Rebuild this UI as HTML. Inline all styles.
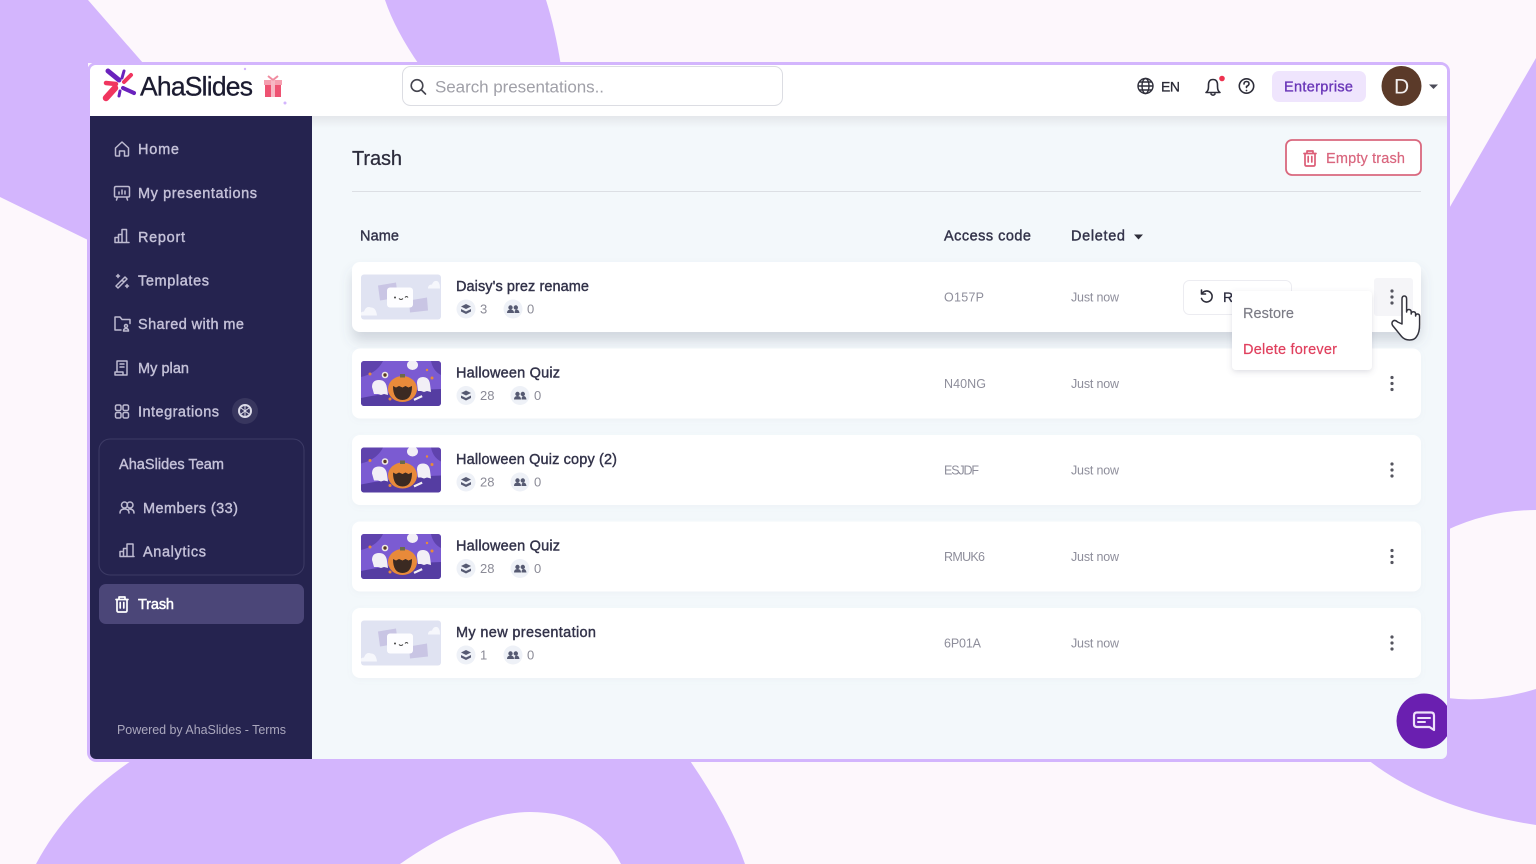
<!DOCTYPE html>
<html lang="en"><head><meta charset="utf-8"><title>AhaSlides - Trash</title>
<style>
html,body{margin:0;padding:0;width:1536px;height:864px;overflow:hidden;background:#fdf7fc}
svg{display:block}
text{font-family:"Liberation Sans",sans-serif}
.n{font-size:14.500px;fill:#c4c1d8;stroke:#c4c1d8;stroke-width:.4}
.t{font-size:14.500px;fill:#33334a;stroke:#33334a;stroke-width:.4}
.s{font-size:13px;fill:#8b8b97}
.ic{fill:none;stroke:#bdbad0;stroke-width:1.500;stroke-linecap:round;stroke-linejoin:round}
.dk{fill:none;stroke:#2e2e3a;stroke-width:1.600;stroke-linecap:round;stroke-linejoin:round}
</style></head><body>
<svg width="1536" height="864" viewBox="0 0 1536 864" xmlns="http://www.w3.org/2000/svg">
<defs>
<linearGradient id="fade" x1="0" y1="0" x2="0" y2="1"><stop offset="0" stop-color="#e4e7eb"/><stop offset="1" stop-color="#f3f8fb"/></linearGradient>
<filter id="sh" x="-5%" y="-30%" width="110%" height="170%"><feDropShadow dx="0" dy="2" stdDeviation="3" flood-color="#8a93a8" flood-opacity=".06"/></filter>
<filter id="sh2" x="-5%" y="-30%" width="110%" height="180%"><feDropShadow dx="0" dy="9" stdDeviation="6" flood-color="#5d6478" flood-opacity=".22"/></filter>
<filter id="sh3" x="-15%" y="-15%" width="130%" height="130%"><feDropShadow dx="0" dy="2" stdDeviation="3" flood-color="#5d6478" flood-opacity=".2"/></filter>
<clipPath id="win"><rect x="90" y="65" width="1357" height="694" rx="6"/></clipPath>
<clipPath id="th"><rect width="80" height="45" rx="3"/></clipPath>
<g id="blank" clip-path="url(#th)">
<rect width="80" height="45" fill="#e0e3f2"/>
<path d="M17 11l18-3 2 15-18 3z" fill="#c9c5e4"/><path d="M48 26l18-3 1 13-18 2z" fill="#c9c5e4"/>
<rect x="26" y="13" width="26" height="20" rx="3" fill="#fdfdff"/>
<circle cx="34" cy="23" r="1" fill="#444"/><path d="M38 24q2 2 4 0" stroke="#444" fill="none"/><path d="M44 23q1.500-2 3 0" stroke="#444" fill="none"/>
<path d="M-1 41q0-4 4-4 2-6 7-4 5 0 6 8z" fill="#f6f7fc"/><path d="M67 14q0-4 4-4 2-5 6-3 2 2 2 7z" fill="#f6f7fc"/>
</g>
<g id="hw" clip-path="url(#th)">
<rect width="80" height="45" fill="#7b5bd2"/>
<path d="M0 0h22q-6 12-22 16z" fill="#5f43ad"/><path d="M0 37q40-8 80-9v17H0z" fill="#553da2"/><path d="M70 0h10v14q-8-4-10-14z" fill="#5f43ad"/>
<path d="M11 26q0-7 7-7t8 8l1 7-4-1-3 1-3-1-4 0z" fill="#f2eff6"/>
<path d="M56 22q0-6 6-6t7 7l1 8-4-1-3 1-3-1-3 0z" fill="#f2eff6"/>
<ellipse cx="51.500" cy="4" rx="5.500" ry="5" fill="#f2eff6"/>
<circle cx="24" cy="14" r="3.300" fill="#f0ebe4"/><circle cx="24" cy="14" r="1.700" fill="#5a3a22"/>
<ellipse cx="41.500" cy="28" rx="14.500" ry="13" fill="#e88a3a"/>
<path d="M32 25l3 1.500 3-1.500 3.500 1.500 3-1.500 3 1.500 3.500-1.500q0 14-9.500 14T32 25z" fill="#3b2a22"/>
<rect x="39" y="13" width="5" height="3.500" fill="#6b6a4a"/>
<circle cx="9" cy="13" r="1.500" fill="#e88a3a"/><circle cx="71" cy="17" r="1.500" fill="#e88a3a"/><circle cx="29" cy="38" r="1.500" fill="#e88a3a"/><circle cx="66" cy="9" r="1.200" fill="#e88a3a"/>
<rect x="53" y="36" width="9" height="2.200" fill="#f2eff6" transform="rotate(-25 57 38)"/>
</g>
<g id="st">
<circle cx="0" cy="0" r="9.500" fill="#eef1f7"/><path d="M0-5l5 2.500-5 2.500-5-2.500zM-5 0l5 2.500 5-2.500v2.500l-5 2.500-5-2.500z" fill="#565a72"/>
</g>
<g id="pp">
<circle cx="0" cy="0" r="9.500" fill="#eef1f7"/><circle cx="-2.500" cy="-1.500" r="2.200" fill="#565a72"/><circle cx="2.800" cy="-1.500" r="2.200" fill="#565a72"/><path d="M-6 4q0-3.500 3.500-3.500t3.500 3.500zM1.500 4q0-3.500 2.200-3.500T6.500 4z" fill="#565a72"/>
</g>
<g id="kb" fill="#55555f"><circle cx="0" cy="-6" r="1.600"/><circle cx="0" cy="0" r="1.600"/><circle cx="0" cy="6" r="1.600"/></g>
<g id="tr"><path d="M-6-4.500h12M-3-4.500v-2.500h6v2.500M-5-4.500v11q0 1.500 1.500 1.500h7q1.500 0 1.500-1.500v-11M-1.800-1.500v5.500M1.800-1.500v5.500"/></g>
</defs>

<rect width="1536" height="864" fill="#fdf7fc"/>
<g fill="#d3b5fd">
<path d="M0 0H88L143 63H88V240L0 197z"/>
<path d="M385 0H546Q555 28 561 66H420Q395 30 385 0z"/>
<path d="M1447 698Q1490 703 1536 689V825Q1425 808 1362 755H1447z"/>
<path d="M36 864Q70 800 140 755H686Q728 815 745 864H621Q595 812 530 812Q475 812 400 864z"/>
<path d="M1447 212L1536 58V510Q1490 510 1447 530z"/>
</g>

<rect x="88.500" y="63.500" width="1360" height="697" rx="8" fill="#d3b5fd" stroke="#d3b5fd" stroke-width="3"/>
<g clip-path="url(#win)">
<rect x="90" y="65" width="1357" height="694" fill="#f3f8fb"/>
<rect x="90" y="65" width="1357" height="51" fill="#fff"/>
<rect x="312" y="116" width="1135" height="12" fill="url(#fade)"/>
<rect x="90" y="116" width="222" height="643" fill="#25234f"/>

<!-- logo -->
<g fill="none" stroke-linecap="round">
<path d="M108 71L119 80" stroke="#6a22bd" stroke-width="5"/>
<path d="M122 78L124 71" stroke="#6a22bd" stroke-width="3"/>
<path d="M124 82L131 75" stroke="#f0355f" stroke-width="4"/>
<path d="M116 84L106 83" stroke="#f0355f" stroke-width="4.500"/>
<path d="M123 88L134 93" stroke="#6a22bd" stroke-width="4"/>
<path d="M120 91L119 96" stroke="#6a22bd" stroke-width="3"/>
<path d="M115 88L106 98" stroke="#f0355f" stroke-width="6.500"/>
</g>
<text x="140" y="95.500" font-size="26.500" fill="#1b1b30" stroke="#1b1b30" stroke-width=".3" textLength="113">AhaSlides</text>
<rect x="265" y="83" width="16" height="14" fill="#ee5272"/><rect x="264" y="80" width="18" height="5" fill="#f59fb0"/><rect x="271" y="80" width="4" height="17" fill="#f7b7c4"/>
<path d="M273 80l-5-4M273 80l5-4" stroke="#f08ca0" stroke-width="2" fill="none"/>
<circle cx="245" cy="69" r="1.200" fill="#d3b5fd"/><circle cx="285" cy="103" r="1.500" fill="#d3b5fd"/>

<!-- search -->
<rect x="402.500" y="66.500" width="380" height="39" rx="8" fill="#fff" stroke="#dcdde3"/>
<circle cx="417" cy="85.500" r="5.800" fill="none" stroke="#45454f" stroke-width="1.600"/><path d="M421.500 90l4 4" stroke="#45454f" stroke-width="1.600" stroke-linecap="round"/>
<text x="435" y="92.500" font-size="17" fill="#a0a0a8" textLength="169">Search presentations..</text>

<!-- top right -->
<g fill="none" stroke="#2e2e3a" stroke-width="1.400"><circle cx="1145.500" cy="86" r="7.500"/><ellipse cx="1145.500" cy="86" rx="3.500" ry="7.500"/><path d="M1138 86h15M1139 82h13M1139 90h13"/></g>
<text x="1161" y="91.500" font-size="14" fill="#2a2a36" stroke="#2a2a36" stroke-width=".3" textLength="19">EN</text>
<path d="M1206 92.500q2.500-1.500 2.500-6v-1.500q0-5.500 4.500-5.500t4.500 5.500v1.500q0 4.500 2.500 6zM1211 94q2 2.500 4 0" class="dk" stroke-width="1.500"/>
<circle cx="1222" cy="78.500" r="2.800" fill="#ee3350"/>
<circle cx="1246.500" cy="86" r="7.200" class="dk"/><path d="M1244 84q0-2.500 2.500-2.500t2.500 2.200q0 1.500-2.500 2.800v1" class="dk" stroke-width="1.400"/><circle cx="1246.500" cy="90.500" r=".9" fill="#2e2e3a"/>
<rect x="1272" y="71" width="94" height="31" rx="7" fill="#efe5fd"/>
<text x="1284" y="91.500" font-size="14.500" fill="#6a37b8" stroke="#6a37b8" stroke-width=".35" textLength="69">Enterprise</text>
<circle cx="1401.500" cy="86" r="20" fill="#5b3a29"/>
<text x="1394" y="93.500" font-size="21" fill="#f2eeee" textLength="15">D</text>
<path d="M1429 84.500h9l-4.500 4.500z" fill="#4c4c58"/>

<!-- side nav -->
<g class="ic">
<path d="M115.500 148l6.500-6 6.500 6v7q0 1-1 1h-3v-5h-5v5h-3q-1 0-1-1z"/>
<path d="M116 186.500h12q1.500 0 1.500 1.500v8q0 1-1.500 1h-12q-1.500 0-1.500-1v-8q0-1.500 1.500-1.500zM117.500 197l-1 3M126.500 197l1 3M119 194v-2M122 194v-4M125 194v-3"/>
<path d="M115 242.500v-5h3.500v5zM118.500 242.500v-8h3.500v8zM122 242.500v-13h4.500v13zM115 242.500h14"/>
<path d="M116 286l9-9 2 2-9 9zM122 280l2 2M118 274.500v3M116.500 276h3M127 284.500v3M125.500 286h3"/>
<path d="M115 330v-13h5l2 2.500h8v4M115 330h6"/><circle cx="126" cy="326" r="1.500"/><path d="M123.500 331q0-2.500 2.500-2.500t2.500 2.500z"/>
<path d="M117 372v-11h10v14h-10M115 372h8v3h-8zM120 364h4M120 367h4"/>
<rect x="115.500" y="405" width="5.500" height="5.500" rx="1.500"/><rect x="123" y="405" width="5.500" height="5.500" rx="1.500"/><rect x="115.500" y="412.500" width="5.500" height="5.500" rx="1.500"/><rect x="123" y="412.500" width="5.500" height="5.500" rx="1.500"/>
</g>
<circle cx="245" cy="411" r="13" fill="#38365e"/><circle cx="245" cy="411" r="6" fill="none" stroke="#dcdbe8" stroke-width="2"/><path d="M241 408l8 6M249 408l-8 6M245 405.500v11" stroke="#dcdbe8"/>
<text class="n" x="138" y="154" textLength="41">Home</text>
<text class="n" x="138" y="198" textLength="119">My presentations</text>
<text class="n" x="138" y="242" textLength="47">Report</text>
<text class="n" x="138" y="285.500" textLength="71">Templates</text>
<text class="n" x="138" y="329" textLength="106">Shared with me</text>
<text class="n" x="138" y="373" textLength="51">My plan</text>
<text class="n" x="138" y="416.500" textLength="81">Integrations</text>

<rect x="99" y="439" width="205" height="136" rx="11" fill="none" stroke="#3d3b66"/>
<text class="n" x="119" y="469" textLength="105">AhaSlides Team</text>
<text class="n" x="143" y="513" textLength="95">Members (33)</text>
<text class="n" x="143" y="556.500" textLength="63">Analytics</text>
<g class="ic"><circle cx="124.500" cy="505" r="3"/><circle cx="130" cy="505" r="3"/><path d="M120 513q0-4 4.500-4t4.500 4M129 509q5 0 5 4"/>
<path d="M120 556.500v-5h3.500v5zM123.500 556.500v-8h3.500v8zM127 556.500v-12.500h6v12.500zM120 556.500h14"/></g>

<rect x="99" y="584" width="205" height="40" rx="7" fill="#4b4678"/>
<use href="#tr" x="122" y="604" fill="none" stroke="#fff" stroke-width="1.700" stroke-linecap="round" stroke-linejoin="round"/>
<text x="138" y="609" font-size="14.500" fill="#fff" stroke="#fff" stroke-width=".5" textLength="36">Trash</text>
<text x="117" y="734" font-size="12.500" fill="#aaa7bd" textLength="169">Powered by AhaSlides - Terms</text>

<!-- content head -->
<text x="352" y="165" font-size="20" fill="#2c2c3c" stroke="#2c2c3c" stroke-width=".25" textLength="50">Trash</text>
<rect x="1286" y="140" width="135" height="35" rx="6" fill="#fff" stroke="#d9687e" stroke-width="1.800"/>
<use href="#tr" x="1310" y="158" fill="none" stroke="#dc5c76" stroke-width="1.700" stroke-linecap="round" stroke-linejoin="round"/>
<text x="1326" y="163" font-size="14.500" fill="#d9667e" stroke="#d9667e" stroke-width=".2" textLength="79">Empty trash</text>
<rect x="352" y="191" width="1069" height="1" fill="#dcdfe4"/>
<text class="t" x="360" y="240.500" textLength="39">Name</text>
<text class="t" x="944" y="240.500" textLength="87">Access code</text>
<text class="t" x="1071" y="240.500" textLength="54">Deleted</text>
<path d="M1134 234.500h9l-4.500 5z" fill="#2e2e3a"/>

<!-- rows -->
<rect x="352" y="262" width="1069" height="70" rx="8" fill="#fff" filter="url(#sh2)"/>
<rect x="352" y="348.500" width="1069" height="70" rx="8" fill="#fff" filter="url(#sh)"/>
<rect x="352" y="435" width="1069" height="70" rx="8" fill="#fff" filter="url(#sh)"/>
<rect x="352" y="521.500" width="1069" height="70" rx="8" fill="#fff" filter="url(#sh)"/>
<rect x="352" y="608" width="1069" height="70" rx="8" fill="#fff" filter="url(#sh)"/>

<use href="#blank" x="361" y="274.500"/><use href="#hw" x="361" y="361"/><use href="#hw" x="361" y="447.500"/><use href="#hw" x="361" y="534"/><use href="#blank" x="361" y="620.500"/>

<text class="t" x="456" y="291" textLength="133">Daisy's prez rename</text>
<text class="t" x="456" y="377.500" textLength="104">Halloween Quiz</text>
<text class="t" x="456" y="464" textLength="161">Halloween Quiz copy (2)</text>
<text class="t" x="456" y="550.500" textLength="104">Halloween Quiz</text>
<text class="t" x="456" y="637" textLength="140">My new presentation</text>

<use href="#st" x="466" y="309"/><text class="s" x="480" y="313.500">3</text><use href="#pp" x="513" y="309"/><text class="s" x="527" y="313.500">0</text>
<use href="#st" x="466" y="395.500"/><text class="s" x="480" y="400">28</text><use href="#pp" x="520" y="395.500"/><text class="s" x="534" y="400">0</text>
<use href="#st" x="466" y="482"/><text class="s" x="480" y="486.500">28</text><use href="#pp" x="520" y="482"/><text class="s" x="534" y="486.500">0</text>
<use href="#st" x="466" y="568.500"/><text class="s" x="480" y="573">28</text><use href="#pp" x="520" y="568.500"/><text class="s" x="534" y="573">0</text>
<use href="#st" x="466" y="655"/><text class="s" x="480" y="659.500">1</text><use href="#pp" x="513" y="655"/><text class="s" x="527" y="659.500">0</text>

<g font-size="12.500" fill="#8e8e9b">
<text x="944" y="301.500" textLength="40">O157P</text><text x="1071" y="301.500" textLength="48">Just now</text>
<text x="944" y="388" textLength="42">N40NG</text><text x="1071" y="388" textLength="48">Just now</text>
<text x="944" y="474.500" textLength="35">ESJDF</text><text x="1071" y="474.500" textLength="48">Just now</text>
<text x="944" y="561" textLength="41">RMUK6</text><text x="1071" y="561" textLength="48">Just now</text>
<text x="944" y="647.500" textLength="37">6P01A</text><text x="1071" y="647.500" textLength="48">Just now</text>
</g>

<!-- row 1 actions -->
<rect x="1183.500" y="280.500" width="108" height="34" rx="6" fill="#fff" stroke="#ececf1"/>
<path d="M1202 293.500a5.500 5.500 0 1 1-0.500 5M1201.500 290v4h4" class="dk" stroke="#23232e" stroke-width="1.800"/>
<text x="1223" y="302" font-size="14" fill="#2a2a3c" stroke="#2a2a3c" stroke-width=".3">R</text>
<rect x="1374" y="278" width="39" height="38" rx="3" fill="#f5f5f8"/>
<use href="#kb" x="1392" y="297"/>
<use href="#kb" x="1392" y="383.500"/><use href="#kb" x="1392" y="470"/><use href="#kb" x="1392" y="556.500"/><use href="#kb" x="1392" y="643"/>

<rect x="1232" y="291" width="140" height="79" rx="4" fill="#fff" filter="url(#sh3)"/>
<text x="1243" y="318" font-size="14.500" fill="#7c7c86" stroke="#7c7c86" stroke-width=".15" textLength="51">Restore</text>
<text x="1243" y="354" font-size="14.500" fill="#e0405e" stroke="#e0405e" stroke-width=".2" textLength="94">Delete forever</text>

<!-- cursor -->
<path d="M1402 324V299q0-3 2.300-3t2.300 3v13q0-2.500 2.300-2.500t2.300 2.500v2q0-2.300 2.200-2.300t2.200 2.300v2q0-2 2-2t2 2.500v8q0 8-3 12-2 3.500-7 3.500-5 0-8-3.500l-9-11q-1.500-3 .5-4.500t4.500 1z" fill="#fff" stroke="#33333d" stroke-width="1.500" stroke-linejoin="round"/>

<!-- chat -->
<circle cx="1424" cy="721" r="27.500" fill="#6a1fb0"/>
<path d="M1417 712.500h14q3 0 3 3v14.500l-4.500-3h-12.500q-3 0-3-3v-8.500q0-3 3-3z" fill="none" stroke="#eee2fa" stroke-width="2.200" stroke-linejoin="round"/>
<path d="M1418 718h12M1418 722h7" stroke="#eee2fa" stroke-width="2" stroke-linecap="round"/>
</g>
</svg>
</body></html>
